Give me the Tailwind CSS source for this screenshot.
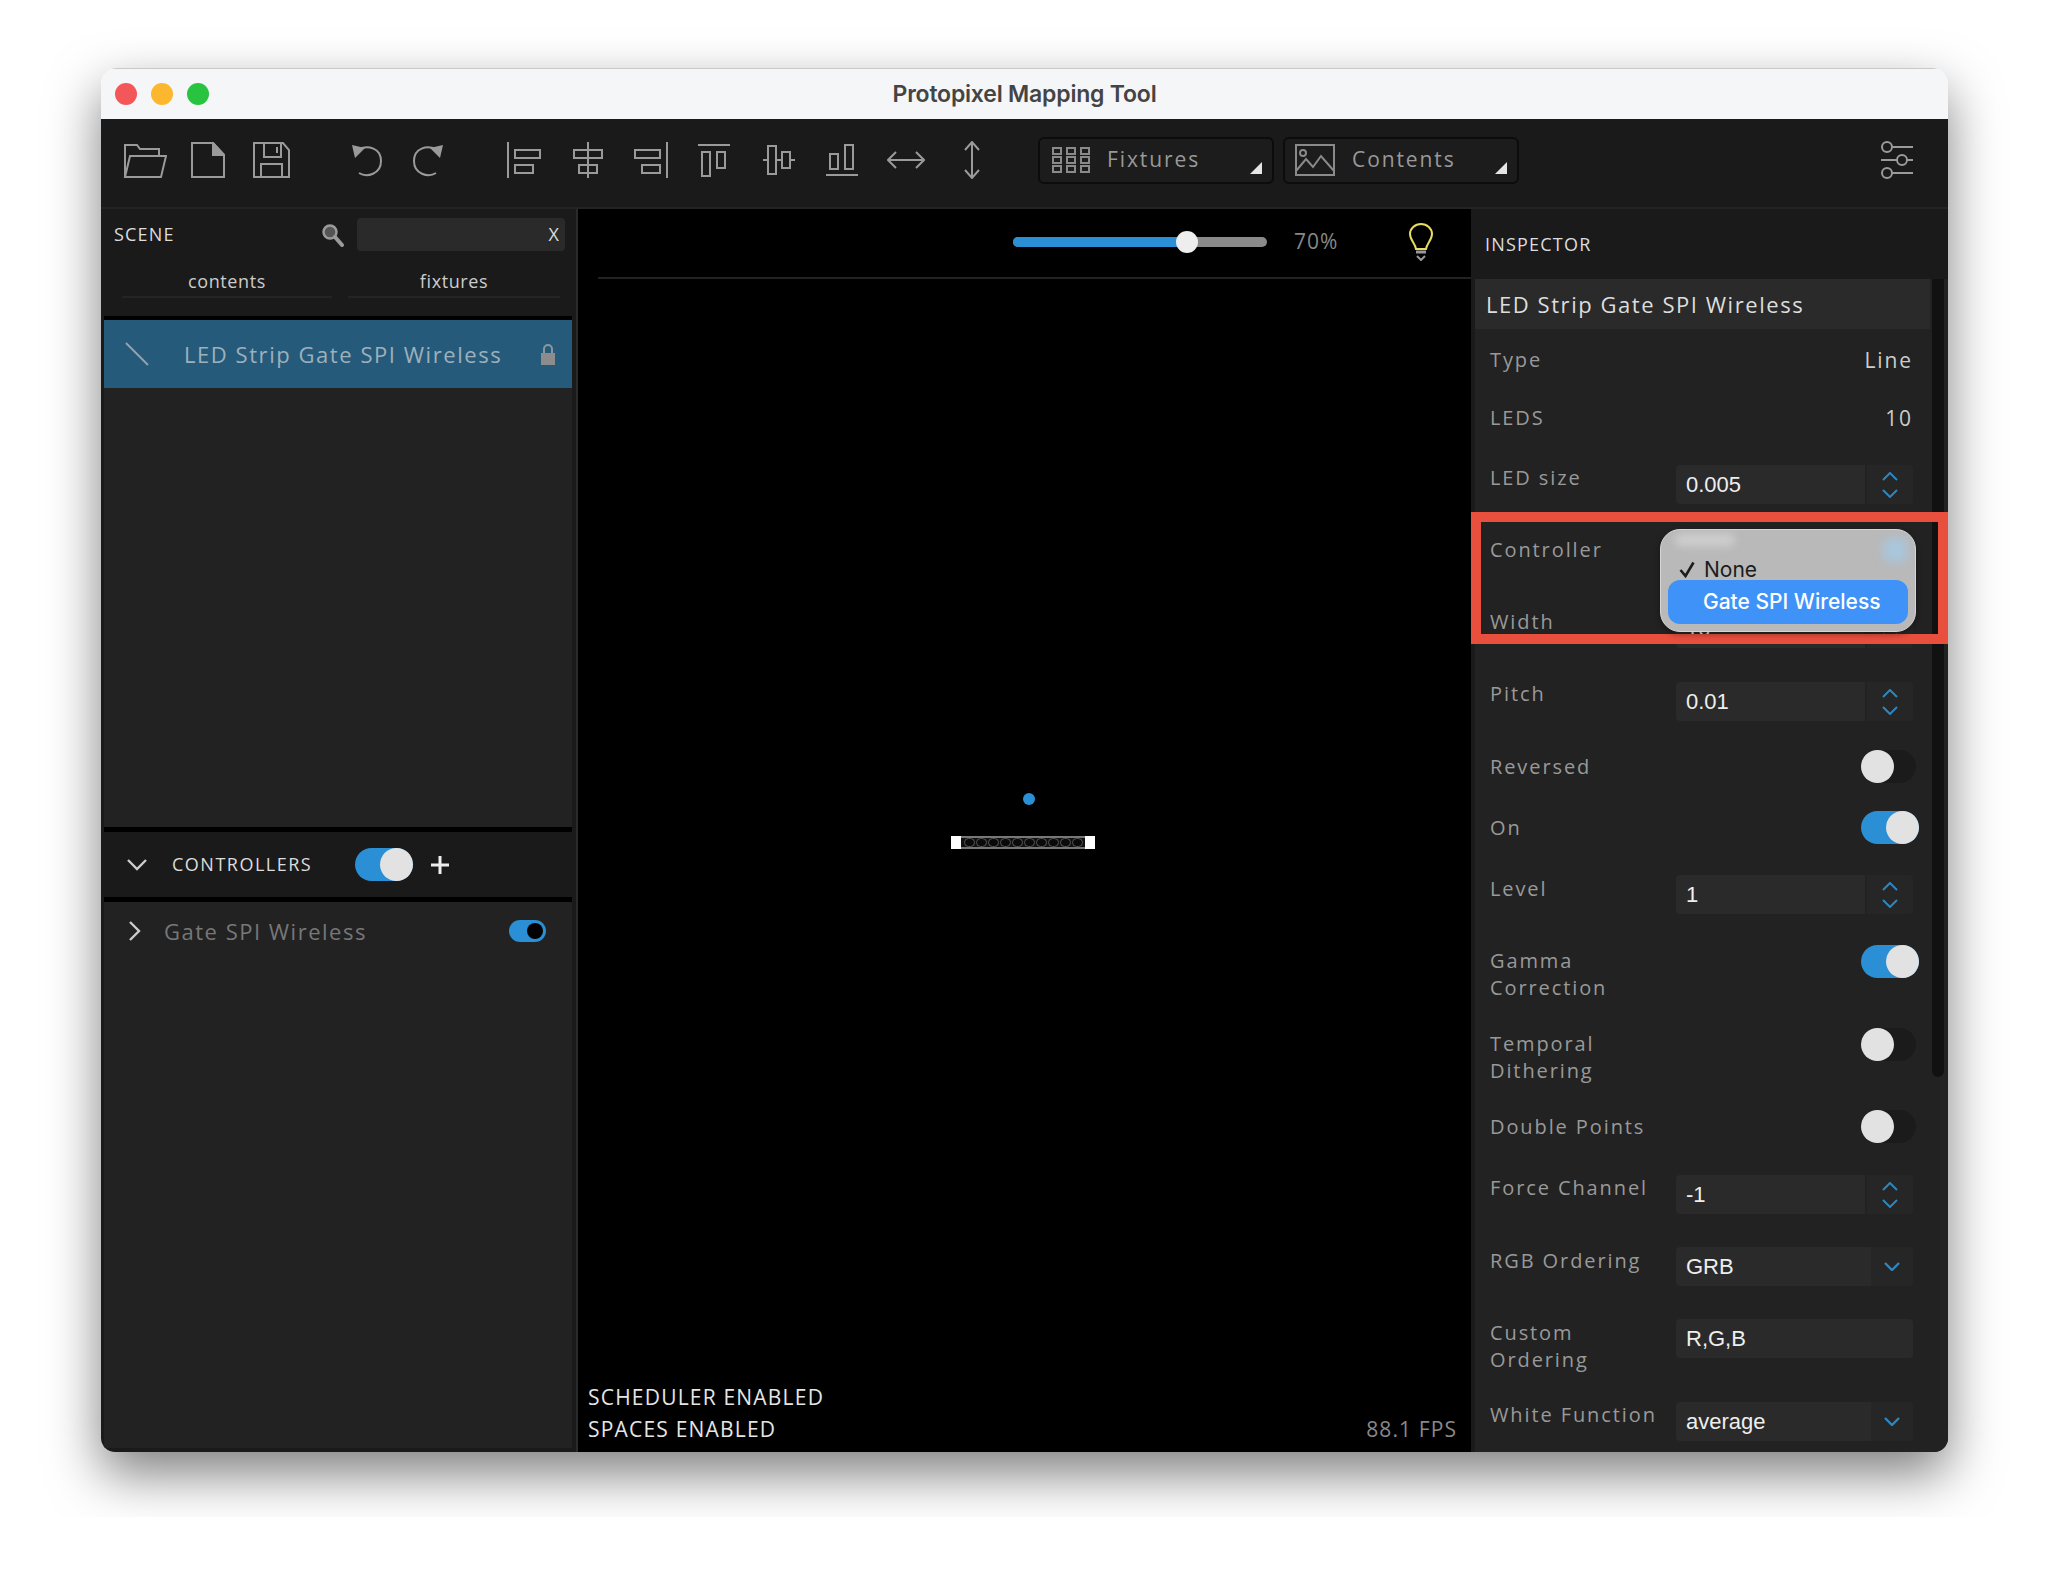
<!DOCTYPE html>
<html lang="en">
<head>
<meta charset="UTF-8">
<title>Protopixel Mapping Tool</title>
<script src="https://cdn.jsdelivr.net/npm/@tailwindcss/browser@4"></script>
</head>
<body class="bg-white font-['Open_Sans',sans-serif]">
<div class="h-[1517px] overflow-hidden pt-[68px] pl-[101px]">
  <!-- window -->
  <div class="relative w-[1847px] h-[1384px] rounded-t-[16px] rounded-b-[14px] overflow-hidden shadow-[0_22px_52px_rgba(0,0,0,0.5)] flex flex-col">
    <!-- title bar -->
    <div class="relative h-[51px] shrink-0 bg-[#f5f6f8] border-t border-[#c9c9c9] flex items-center justify-center">
      <div class="absolute left-[14px] top-[14px] flex gap-[14px]">
        <span class="w-[22px] h-[22px] rounded-full bg-[#f4575a]"></span>
        <span class="w-[22px] h-[22px] rounded-full bg-[#fcb72e]"></span>
        <span class="w-[22px] h-[22px] rounded-full bg-[#28c43f]"></span>
      </div>
      <span class="font-['Inter'] font-semibold text-[23px] text-[#444] tracking-[-0.2px]">Protopixel Mapping Tool</span>
    </div>
    <!-- toolbar -->
    <div class="h-[90px] shrink-0 bg-[#1a1a1a] border-b-2 border-[#242424] flex items-center pl-[22px] pb-[6px]">
      <svg class="w-[44px] h-[38px]" viewBox="0 0 44 38" fill="none" stroke="#9a9a9a" stroke-width="2"><path d="M2 36V4h12l3 4h19v7"/><path d="M2 36l5-21h36l-5 21z"/></svg>
      <svg class="w-[34px] h-[36px] ml-[24px]" viewBox="0 0 34 36" fill="none" stroke="#9a9a9a" stroke-width="2"><path d="M1 1h21l11 12v22H1z"/><path d="M22 1l11 12H22z" fill="#9a9a9a"/></svg>
      <svg class="w-[37px] h-[36px] ml-[28px]" viewBox="0 0 37 36" fill="none" stroke="#9a9a9a" stroke-width="2"><path d="M1 1h29l6 7v27H1z"/><path d="M11 1v14h17V1"/><path d="M24 5v6"/><path d="M8 35V22h21v13"/></svg>
      <svg class="w-[32px] h-[34px] ml-[61px]" viewBox="0 0 32 34" fill="none" stroke="#9a9a9a" stroke-width="2"><path d="M8 6c9-4 22-1 22 12 0 13-14 17-22 12"/><path d="M1 2l13 3-10 10z" fill="#9a9a9a" stroke="none"/></svg>
      <svg class="w-[32px] h-[34px] ml-[29px]" viewBox="0 0 32 34" fill="none" stroke="#9a9a9a" stroke-width="2"><path d="M24 6C15 2 2 5 2 18c0 13 14 17 22 12"/><path d="M31 2l-13 3 10 10z" fill="#9a9a9a" stroke="none"/></svg>
      <svg class="w-[36px] h-[36px] ml-[62px]" viewBox="0 0 36 36" fill="none" stroke="#9a9a9a" stroke-width="2"><path d="M2 0v36"/><rect x="9" y="8" width="25" height="8"/><rect x="9" y="23" width="18" height="8"/></svg>
      <svg class="w-[32px] h-[36px] ml-[30px]" viewBox="0 0 32 36" fill="none" stroke="#9a9a9a" stroke-width="2"><path d="M16 0v36"/><rect x="2" y="8" width="28" height="8"/><rect x="7" y="23" width="18" height="8"/></svg>
      <svg class="w-[36px] h-[36px] ml-[29px]" viewBox="0 0 36 36" fill="none" stroke="#9a9a9a" stroke-width="2"><path d="M34 0v36"/><rect x="2" y="8" width="25" height="8"/><rect x="9" y="23" width="18" height="8"/></svg>
      <svg class="w-[32px] h-[34px] ml-[29px]" viewBox="0 0 32 34" fill="none" stroke="#9a9a9a" stroke-width="2"><path d="M0 2h32"/><rect x="4" y="9" width="8" height="24"/><rect x="19" y="9" width="8" height="16"/></svg>
      <svg class="w-[32px] h-[34px] ml-[33px]" viewBox="0 0 32 34" fill="none" stroke="#9a9a9a" stroke-width="2"><path d="M0 17h32"/><rect x="5" y="3" width="8" height="28" fill="#1a1a1a"/><rect x="19" y="9" width="8" height="16" fill="#1a1a1a"/></svg>
      <svg class="w-[32px] h-[34px] ml-[31px]" viewBox="0 0 32 34" fill="none" stroke="#9a9a9a" stroke-width="2"><path d="M0 32h32"/><rect x="4" y="11" width="8" height="15"/><rect x="19" y="2" width="8" height="24"/></svg>
      <svg class="w-[38px] h-[20px] ml-[29px]" viewBox="0 0 38 20" fill="none" stroke="#9a9a9a" stroke-width="2"><path d="M1 10h36M9 2l-8 8 8 8M29 2l8 8-8 8"/></svg>
      <svg class="w-[18px] h-[38px] ml-[38px]" viewBox="0 0 18 38" fill="none" stroke="#9a9a9a" stroke-width="2"><path d="M9 1v36M2 9l7-8 7 8M2 29l7 8 7-8"/></svg>
      <!-- dropdown buttons -->
      <div class="relative w-[236px] h-[47px] ml-[57px] bg-[#1c1c1c] border-2 border-[#0c0c0c] rounded-[6px] flex items-center pl-[12px]">
        <svg class="w-[38px] h-[26px]" viewBox="0 0 38 26" fill="none" stroke="#8a8a8a" stroke-width="2"><rect x="1" y="1" width="8" height="6"/><rect x="15" y="1" width="8" height="6"/><rect x="29" y="1" width="8" height="6"/><rect x="1" y="10" width="8" height="6"/><rect x="15" y="10" width="8" height="6"/><rect x="29" y="10" width="8" height="6"/><rect x="1" y="19" width="8" height="6"/><rect x="15" y="19" width="8" height="6"/><rect x="29" y="19" width="8" height="6"/></svg>
        <span class="ml-[17px] text-[21px] tracking-[1.9px] text-[#999]">Fixtures</span>
        <svg class="absolute right-[10px] bottom-[8px] w-[12px] h-[12px]" viewBox="0 0 12 12"><path d="M12 0v12H0z" fill="#e5e5e5"/></svg>
      </div>
      <div class="relative w-[236px] h-[47px] ml-[9px] bg-[#1c1c1c] border-2 border-[#0c0c0c] rounded-[6px] flex items-center pl-[10px]">
        <svg class="w-[40px] h-[32px]" viewBox="0 0 40 32" fill="none" stroke="#8a8a8a" stroke-width="2"><rect x="1" y="1" width="38" height="30"/><circle cx="8" cy="9" r="3"/><path d="M1 27l10-12 7 8 8-11 13 15"/></svg>
        <span class="ml-[17px] text-[21px] tracking-[1.9px] text-[#999]">Contents</span>
        <svg class="absolute right-[10px] bottom-[8px] w-[12px] h-[12px]" viewBox="0 0 12 12"><path d="M12 0v12H0z" fill="#e5e5e5"/></svg>
      </div>
      <svg class="w-[34px] h-[38px] ml-auto mr-[34px]" viewBox="0 0 34 38" fill="none" stroke="#9a9a9a" stroke-width="2"><path d="M12 6h21M1 19h17M26 19h7M12 32h21"/><circle cx="7" cy="6" r="5"/><circle cx="22" cy="19" r="5"/><circle cx="7" cy="32" r="5"/></svg>
    </div>
    <!-- main -->
    <div class="flex-1 flex min-h-0">
      <!-- left column -->
      <aside class="w-[477px] shrink-0 flex flex-col bg-[#1a1a1a] pl-[3px] pr-[4px] pb-[4px] border-r-2 border-[#2a2a2a]">
        <div class="h-[107px] shrink-0 relative">
          <div class="flex items-center h-[33px] mt-[9px] pl-[10px]">
            <span class="text-[18px] tracking-[1.2px] text-[#ddd] w-[207px]">SCENE</span>
            <svg class="w-[24px] h-[24px]" viewBox="0 0 24 24" fill="none"><circle cx="9" cy="9" r="6.5" stroke="#9a9a9a" stroke-width="2.5" fill="#555"/><path d="M14 14l7 8" stroke="#9a9a9a" stroke-width="4" stroke-linecap="round"/></svg>
            <div class="ml-[12px] w-[208px] h-[33px] bg-[#2a2a2a] rounded-[4px] flex items-center justify-end pr-[6px]"><span class="text-[18px] text-[#ddd]">X</span></div>
          </div>
          <div class="flex mt-[18px] pl-[18px] gap-[16px]">
            <div class="w-[210px] h-[29px] border-b-2 border-[#242424] text-center text-[18px] leading-[24px] tracking-[0.6px] text-[#ccc]">contents</div>
            <div class="w-[212px] h-[29px] border-b-2 border-[#242424] text-center text-[18px] leading-[24px] tracking-[0.6px] text-[#ccc]">fixtures</div>
          </div>
        </div>
        <div class="h-[4px] shrink-0 bg-black"></div>
        <div class="h-[507px] shrink-0 bg-[#222]">
          <div class="h-[68px] bg-[#265a7a] flex items-center pl-[21px]">
            <svg class="w-[24px] h-[24px]" viewBox="0 0 24 24" fill="none"><path d="M1 1l22 22" stroke="#8fa3b0" stroke-width="2"/></svg>
            <span class="ml-[35px] text-[22px] tracking-[1.55px] text-[#9db0bc] whitespace-nowrap">LED Strip Gate SPI Wireless</span>
            <svg class="ml-auto mr-[16px] w-[16px] h-[22px]" viewBox="0 0 16 22" fill="none"><path d="M4 10V6a4 4 0 018 0v4" stroke="#8a97a0" stroke-width="2"/><rect x="1" y="10" width="14" height="12" fill="#8c8c8c"/></svg>
          </div>
        </div>
        <div class="h-[5px] shrink-0 bg-black"></div>
        <div class="h-[65px] shrink-0 flex items-center pl-[23px]">
          <svg class="w-[20px] h-[12px]" viewBox="0 0 20 12" fill="none"><path d="M1 1l9 9 9-9" stroke="#ccc" stroke-width="2.4"/></svg>
          <span class="ml-[25px] text-[18px] tracking-[1.5px] text-[#ddd]">CONTROLLERS</span>
          <div class="ml-[43px] relative w-[58px] h-[33px] rounded-full bg-[#2a8fd4]"><span class="absolute right-0 top-0 w-[33px] h-[33px] rounded-full bg-[#e2e2e2]"></span></div>
          <svg class="ml-[18px] w-[18px] h-[18px]" viewBox="0 0 18 18"><path d="M9 0v18M0 9h18" stroke="#eee" stroke-width="3"/></svg>
        </div>
        <div class="h-[5px] shrink-0 bg-black"></div>
        <div class="flex-1 bg-[#222] pt-[15px]">
          <div class="flex items-center h-[28px] pl-[24px]">
            <svg class="w-[13px] h-[20px]" viewBox="0 0 13 20" fill="none"><path d="M2 1l9 9-9 9" stroke="#ccc" stroke-width="2.4"/></svg>
            <span class="ml-[23px] text-[22px] tracking-[1.5px] text-[#777]">Gate SPI Wireless</span>
            <div class="relative ml-[142px] w-[37px] h-[22px] rounded-full bg-[#2a8fd4]"><span class="absolute right-[3px] top-[3px] w-[16px] h-[16px] rounded-full bg-black"></span></div>
          </div>
        </div>
      </aside>
      <!-- canvas -->
      <main class="w-[893px] shrink-0 bg-black relative">
        <div class="h-[70px] ml-[20px] border-b-2 border-[#222] flex items-center pl-[415px] pb-[2px]">
          <div class="relative w-[254px] h-[10px] rounded-full bg-[#8a8a8a]">
            <div class="w-[174px] h-[10px] rounded-l-full bg-[#2a8fd4]"></div>
            <span class="absolute left-[163px] top-[-6px] w-[22px] h-[22px] rounded-full bg-[#eee]"></span>
          </div>
          <span class="ml-[27px] text-[21px] tracking-[1px] text-[#888]">70%</span>
          <svg class="ml-[70px] w-[26px] h-[38px]" viewBox="0 0 26 38" fill="none" stroke="#e6dc62" stroke-width="2"><path d="M8 26c-1-6-6-9-6-15a11 10 0 0122 0c0 6-5 9-6 15z"/><path d="M8 29h10" stroke="#999" stroke-width="3"/><path d="M9 33l4 4 4-4" stroke="#999"/></svg>
        </div>
        <!-- fixture on canvas -->
        <span class="absolute left-[445px] top-[584px] w-[12px] h-[12px] rounded-full bg-[#2a8fd4]"></span>
        <div class="absolute left-[373px] top-[627px] w-[144px] h-[13px] border-y-2 border-[#777] flex items-center justify-between bg-[#111]">
          <span class="w-[10px] h-[13px] bg-white"></span>
          <div class="flex gap-[1px]">
            <span class="w-[11px] h-[9px] rounded-full border border-[#555] bg-[#0a0a0a]"></span><span class="w-[11px] h-[9px] rounded-full border border-[#555] bg-[#0a0a0a]"></span><span class="w-[11px] h-[9px] rounded-full border border-[#555] bg-[#0a0a0a]"></span><span class="w-[11px] h-[9px] rounded-full border border-[#555] bg-[#0a0a0a]"></span><span class="w-[11px] h-[9px] rounded-full border border-[#555] bg-[#0a0a0a]"></span><span class="w-[11px] h-[9px] rounded-full border border-[#555] bg-[#0a0a0a]"></span><span class="w-[11px] h-[9px] rounded-full border border-[#555] bg-[#0a0a0a]"></span><span class="w-[11px] h-[9px] rounded-full border border-[#555] bg-[#0a0a0a]"></span><span class="w-[11px] h-[9px] rounded-full border border-[#555] bg-[#0a0a0a]"></span><span class="w-[11px] h-[9px] rounded-full border border-[#555] bg-[#0a0a0a]"></span>
          </div>
          <span class="w-[10px] h-[13px] bg-white"></span>
        </div>
        <div class="absolute left-[10px] bottom-[7px] text-[21px] leading-[32px] tracking-[1.2px] text-[#e5e5e5]">SCHEDULER ENABLED<br>SPACES ENABLED</div>
        <div class="absolute right-[14px] bottom-[7px] text-[21px] leading-[32px] tracking-[1.1px] text-[#888]">88.1 FPS</div>
      </main>
      <!-- inspector -->
      <aside class="relative flex-1 bg-[#1a1a1a] pl-[4px] min-w-0 flex flex-col">
        <div class="h-[70px] shrink-0 flex items-center pl-[10px]"><span class="text-[18px] tracking-[1.2px] text-[#ddd]">INSPECTOR</span></div>
        <div class="relative flex-1 bg-[#222] min-h-0">
          <div class="absolute right-[4px] top-0 w-[12px] h-[798px] rounded-b-[6px] bg-[#111]"></div>
          <div class="h-[50px] w-[455px] bg-[#2a2a2a] flex items-center pl-[11px]"><span class="text-[22px] tracking-[1.55px] text-[#ddd] whitespace-nowrap">LED Strip Gate SPI Wireless</span></div>
          <div class="pt-[18px] pl-[15px] w-[438px] text-[20px] leading-[27px] tracking-[1.9px] text-[#999]">
            <div class="h-[58px] flex justify-between"><span class="mt-[-1px]">Type</span><span class="text-[#ccc] text-[21px]">Line</span></div>
            <div class="h-[60px] flex justify-between"><span class="mt-[-1px]">LEDS</span><span class="text-[#ccc] text-[21px]">10</span></div>
            <div class="h-[72px] flex justify-between">
              <span class="mt-[-1px]">LED size</span>
              <div class="flex h-[39px] w-[237px] font-['Liberation_Sans'] text-[22px] leading-[39px] tracking-normal text-[#eee]"><div class="w-[189px] bg-[#2a2a2a] rounded-l-[4px] pl-[10px]">0.005</div><div class="ml-[2px] w-[46px] bg-[#262626] rounded-r-[4px] flex flex-col items-center justify-center gap-[8px]"><svg class="w-[16px] h-[9px]" viewBox="0 0 16 9" fill="none"><path d="M1 8l7-7 7 7" stroke="#2e86c1" stroke-width="2"/></svg><svg class="w-[16px] h-[9px]" viewBox="0 0 16 9" fill="none"><path d="M1 1l7 7 7-7" stroke="#2e86c1" stroke-width="2"/></svg></div></div>
            </div>
            <div class="h-[72px] flex justify-between">
              <span class="mt-[-1px]">Controller</span>
              <div class="flex h-[39px] w-[237px] font-['Liberation_Sans'] text-[22px] leading-[39px] tracking-normal text-[#eee]"><div class="w-[195px] bg-[#2a2a2a] rounded-l-[4px] pl-[10px]">None</div><div class="w-[42px] bg-[#262626] rounded-r-[4px]"></div></div>
            </div>
            <div class="h-[73px] flex justify-between">
              <span class="mt-[-1px]">Width</span>
              <div class="flex h-[39px] w-[237px] font-['Liberation_Sans'] text-[22px] leading-[39px] tracking-normal text-[#eee]"><div class="w-[189px] bg-[#2a2a2a] rounded-l-[4px] pl-[10px]">10</div><div class="ml-[2px] w-[46px] bg-[#262626] rounded-r-[4px] flex flex-col items-center justify-center gap-[8px]"><svg class="w-[16px] h-[9px]" viewBox="0 0 16 9" fill="none"><path d="M1 8l7-7 7 7" stroke="#2e86c1" stroke-width="2"/></svg><svg class="w-[16px] h-[9px]" viewBox="0 0 16 9" fill="none"><path d="M1 1l7 7 7-7" stroke="#2e86c1" stroke-width="2"/></svg></div></div>
            </div>
            <div class="h-[71px] flex justify-between">
              <span class="mt-[-2px]">Pitch</span>
              <div class="flex h-[39px] w-[237px] font-['Liberation_Sans'] text-[22px] leading-[39px] tracking-normal text-[#eee]"><div class="w-[189px] bg-[#2a2a2a] rounded-l-[4px] pl-[10px]">0.01</div><div class="ml-[2px] w-[46px] bg-[#262626] rounded-r-[4px] flex flex-col items-center justify-center gap-[8px]"><svg class="w-[16px] h-[9px]" viewBox="0 0 16 9" fill="none"><path d="M1 8l7-7 7 7" stroke="#2e86c1" stroke-width="2"/></svg><svg class="w-[16px] h-[9px]" viewBox="0 0 16 9" fill="none"><path d="M1 1l7 7 7-7" stroke="#2e86c1" stroke-width="2"/></svg></div></div>
            </div>
            <div class="h-[61px] flex justify-between">
              <span>Reversed</span>
              <div class="relative w-[55px] h-[33px] mt-[-3px] mr-[-3px] rounded-full bg-[#1b1b1b]"><span class="absolute left-0 top-0 w-[33px] h-[33px] rounded-full bg-[#e2e2e2]"></span></div>
            </div>
            <div class="h-[61px] flex justify-between">
              <span>On</span>
              <div class="relative w-[58px] h-[33px] mt-[-3px] mr-[-6px] rounded-full bg-[#2a8fd4]"><span class="absolute right-0 top-0 w-[33px] h-[33px] rounded-full bg-[#e2e2e2]"></span></div>
            </div>
            <div class="h-[72px] flex justify-between">
              <span>Level</span>
              <div class="flex h-[39px] w-[237px] font-['Liberation_Sans'] text-[22px] leading-[39px] tracking-normal text-[#eee]"><div class="w-[189px] bg-[#2a2a2a] rounded-l-[4px] pl-[10px]">1</div><div class="ml-[2px] w-[46px] bg-[#262626] rounded-r-[4px] flex flex-col items-center justify-center gap-[8px]"><svg class="w-[16px] h-[9px]" viewBox="0 0 16 9" fill="none"><path d="M1 8l7-7 7 7" stroke="#2e86c1" stroke-width="2"/></svg><svg class="w-[16px] h-[9px]" viewBox="0 0 16 9" fill="none"><path d="M1 1l7 7 7-7" stroke="#2e86c1" stroke-width="2"/></svg></div></div>
            </div>
            <div class="h-[83px] flex justify-between">
              <span>Gamma<br>Correction</span>
              <div class="relative w-[58px] h-[33px] mt-[-2px] mr-[-6px] rounded-full bg-[#2a8fd4]"><span class="absolute right-0 top-0 w-[33px] h-[33px] rounded-full bg-[#e2e2e2]"></span></div>
            </div>
            <div class="h-[83px] flex justify-between">
              <span>Temporal<br>Dithering</span>
              <div class="relative w-[55px] h-[33px] mt-[-2px] mr-[-3px] rounded-full bg-[#1b1b1b]"><span class="absolute left-0 top-0 w-[33px] h-[33px] rounded-full bg-[#e2e2e2]"></span></div>
            </div>
            <div class="h-[62px] flex justify-between">
              <span>Double Points</span>
              <div class="relative w-[55px] h-[33px] mt-[-3px] mr-[-3px] rounded-full bg-[#1b1b1b]"><span class="absolute left-0 top-0 w-[33px] h-[33px] rounded-full bg-[#e2e2e2]"></span></div>
            </div>
            <div class="h-[72px] flex justify-between">
              <span class="mt-[-1px]">Force Channel</span>
              <div class="flex h-[39px] w-[237px] font-['Liberation_Sans'] text-[22px] leading-[39px] tracking-normal text-[#eee]"><div class="w-[189px] bg-[#2a2a2a] rounded-l-[4px] pl-[10px]">-1</div><div class="ml-[2px] w-[46px] bg-[#262626] rounded-r-[4px] flex flex-col items-center justify-center gap-[8px]"><svg class="w-[16px] h-[9px]" viewBox="0 0 16 9" fill="none"><path d="M1 8l7-7 7 7" stroke="#2e86c1" stroke-width="2"/></svg><svg class="w-[16px] h-[9px]" viewBox="0 0 16 9" fill="none"><path d="M1 1l7 7 7-7" stroke="#2e86c1" stroke-width="2"/></svg></div></div>
            </div>
            <div class="h-[72px] flex justify-between">
              <span>RGB Ordering</span>
              <div class="flex h-[39px] w-[237px] font-['Liberation_Sans'] text-[22px] leading-[39px] tracking-normal text-[#eee]"><div class="w-[195px] bg-[#2a2a2a] rounded-l-[4px] pl-[10px]">GRB</div><div class="w-[42px] bg-[#262626] rounded-r-[4px] flex items-center justify-center"><svg class="w-[16px] h-[9px]" viewBox="0 0 16 9" fill="none"><path d="M1 1l7 7 7-7" stroke="#2e86c1" stroke-width="2.4"/></svg></div></div>
            </div>
            <div class="h-[83px] flex justify-between">
              <span>Custom<br>Ordering</span>
              <div class="h-[39px] w-[237px] bg-[#2a2a2a] rounded-[4px] pl-[10px] font-['Liberation_Sans'] text-[22px] leading-[39px] tracking-normal text-[#eee]">R,G,B</div>
            </div>
            <div class="h-[50px] flex justify-between">
              <span class="mt-[-1px]">White Function</span>
              <div class="flex h-[39px] w-[237px] font-['Liberation_Sans'] text-[22px] leading-[39px] tracking-normal text-[#eee]"><div class="w-[195px] bg-[#2a2a2a] rounded-l-[4px] pl-[10px]">average</div><div class="w-[42px] bg-[#262626] rounded-r-[4px] flex items-center justify-center"><svg class="w-[16px] h-[9px]" viewBox="0 0 16 9" fill="none"><path d="M1 1l7 7 7-7" stroke="#2e86c1" stroke-width="2.4"/></svg></div></div>
            </div>
          </div>
        </div>
        <!-- red highlight and native popup -->
        <div class="absolute left-0 right-0 top-[303px] h-[132px] border-[10px] border-[#e84f3d]"></div>
        <div class="absolute left-[189px] top-[320px] w-[256px] h-[103px] rounded-[20px] bg-[#b9b9b9] border border-[#d5d5d5] shadow-[0_2px_6px_rgba(0,0,0,0.4)] overflow-hidden font-['Inter'] text-[21px]">
          <span class="absolute left-[14px] top-[4px] w-[60px] h-[12px] rounded-full bg-[#cfcfcf] blur-[4px]"></span>
          <span class="absolute right-[8px] top-[8px] w-[24px] h-[24px] rounded-[6px] bg-[#a9c6dc] blur-[5px]"></span>
          <div class="absolute left-[18px] top-[24px] flex items-center text-[#1c1c1c]">
            <svg class="w-[16px] h-[17px]" viewBox="0 0 16 17" fill="none"><path d="M1.5 9l5 6L14.5 1.5" stroke="#1c1c1c" stroke-width="2.6"/></svg>
            <span class="ml-[9px]">None</span>
          </div>
          <div class="absolute left-[7px] top-[50px] w-[240px] h-[44px] rounded-[12px] bg-[#3f92f8] text-white font-medium leading-[44px] pl-[35px] whitespace-nowrap">Gate SPI Wireless</div>
        </div>
      </aside>
    </div>
  </div>
</div>
</body>
</html>
